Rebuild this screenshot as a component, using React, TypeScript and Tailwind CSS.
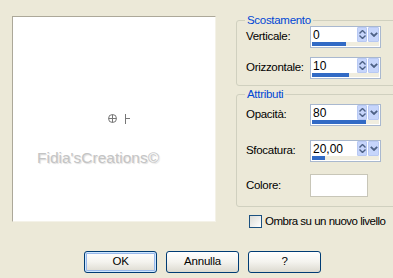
import React from 'react';

const font = { fontFamily: '"Liberation Sans", Arial, sans-serif' };

function SpinInput({ value, fill }: { value: string; fill: number }) {
  return (
    <div className="w-[71px] h-[22px] border border-[#a9b8cf] bg-white flex flex-col">
      <div className="flex h-[15px]">
        <div className="flex-1 pl-[2px] text-[12px] leading-[16px] text-black">{value}</div>
        <div className="w-[10px] h-[15px] bg-[#c6d5fb] border border-[#b8c9f3] rounded-[1px] flex flex-col items-center justify-center gap-[1px]">
          <svg width="7" height="4" viewBox="0 0 7 4">
            <path d="M0.5 3.5 L3.5 0.5 L6.5 3.5" fill="none" stroke="#4d6185" strokeWidth="1.4" />
          </svg>
          <svg width="7" height="4" viewBox="0 0 7 4">
            <path d="M0.5 0.5 L3.5 3.5 L6.5 0.5" fill="none" stroke="#4d6185" strokeWidth="1.4" />
          </svg>
        </div>
        <div className="w-[11px] h-[15px] ml-[1px] mr-[1px] bg-[#c6d5fb] border border-[#b8c9f3] rounded-[1px] flex items-center justify-center">
          <svg width="8" height="5" viewBox="0 0 8 5">
            <path d="M0.8 0.8 L4 4 L7.2 0.8" fill="none" stroke="#4d6185" strokeWidth="1.8" />
          </svg>
        </div>
      </div>
      <div className="mt-auto mb-[1px] h-[4px] bg-[#f0eddf] mx-[1px]">
        <div className="h-full bg-[#316ac5]" style={{ width: `${fill}%` }} />
      </div>
    </div>
  );
}

function Row({ label, children }: { label: string; children: React.ReactNode }) {
  return (
    <div className="flex items-center">
      <div className="w-[73px] pl-[9px] text-[11.5px] tracking-[-0.3px] text-black">{label}</div>
      {children}
    </div>
  );
}

function XpButton({ label, isDefault }: { label: string; isDefault?: boolean }) {
  return (
    <button
      className={`w-[73px] h-[22px] rounded-[3px] border border-[#003c74] bg-gradient-to-b from-[#ffffff] via-[#f4f3ee] to-[#dcdad0] text-[11.5px] tracking-[-0.2px] text-black ${
        isDefault ? 'shadow-[inset_0_0_0_1px_#cee7ff,inset_0_0_0_2px_#98b8ea]' : ''
      }`}
    >
      {label}
    </button>
  );
}

export default function App() {
  return (
    <div className="w-[393px] h-[278px] bg-[#ece9d8] overflow-hidden flex flex-col" style={font}>
      <div className="flex">
        {/* preview */}
        <div className="shrink-0 ml-[12px] mt-[16px] w-[204px] h-[206px] bg-white border-t border-l border-[#aca899] border-r border-b border-r-[#f4f2e8] border-b-[#f4f2e8] relative">
          <svg className="absolute left-[94px] top-[96px]" width="26" height="12" viewBox="0 0 26 12">
            <circle cx="5.5" cy="5.5" r="4" fill="none" stroke="#777" strokeWidth="1" />
            <path d="M1.5 5.5 H9.5 M5.5 1.5 V9.5" stroke="#777" strokeWidth="1" />
            <path d="M18.5 1 V11 M18.5 5.5 H23" stroke="#777" strokeWidth="1" />
          </svg>
          <div
            className="absolute left-[24px] top-[132px] text-[15.5px] leading-[18px] text-[#c4c4c4] whitespace-nowrap"
            style={{ textShadow: '1px 1px 1px #dedede' }}
          >
            Fidia'sCreations©
          </div>
        </div>

        {/* settings */}
        <div className="shrink-0 ml-[20px] w-[170px] flex flex-col">
          <fieldset className="mt-[14px] border border-[#d0d0bf] rounded-[3px] px-0 pt-0 pb-[6px] m-0">
            <legend className="ml-[8px] px-[2px] text-[11.5px] leading-[12px] tracking-[-0.3px] text-[#0046d5]">
              Scostamento
            </legend>
            <div className="flex flex-col gap-[9px]">
              <Row label="Verticale:">
                <SpinInput value="0" fill={51} />
              </Row>
              <Row label="Orizzontale:">
                <SpinInput value="10" fill={55} />
              </Row>
            </div>
          </fieldset>

          <fieldset className="mt-[2px] border border-[#d0d0bf] rounded-[3px] px-0 pt-[4px] pb-[9px] m-0">
            <legend className="ml-[8px] px-[2px] text-[11.5px] leading-[12px] tracking-[-0.3px] text-[#0046d5]">
              Attributi
            </legend>
            <div className="flex flex-col">
              <Row label="Opacità:">
                <SpinInput value="80" fill={80} />
              </Row>
              <div className="mt-[14px]">
                <Row label="Sfocatura:">
                  <SpinInput value="20,00" fill={20} />
                </Row>
              </div>
              <div className="mt-[12px]">
                <Row label="Colore:">
                  <div className="w-[58px] h-[23px] bg-white border border-[#c8c6b8]" />
                </Row>
              </div>
            </div>
          </fieldset>

          <div className="mt-[6px] ml-[13px] flex items-center gap-[3px]">
            <div className="w-[13px] h-[13px] border border-[#1c5180] bg-gradient-to-br from-[#dcdcd7] to-[#ffffff]" />
            <span className="text-[11.5px] tracking-[-0.5px] text-black whitespace-nowrap">Ombra su un nuovo livello</span>
          </div>
        </div>
      </div>

      <div className="mt-auto mb-[5px] pl-[84px] flex gap-[9px]">
        <XpButton label="OK" isDefault />
        <XpButton label="Annulla" />
        <XpButton label="?" />
      </div>
    </div>
  );
}
